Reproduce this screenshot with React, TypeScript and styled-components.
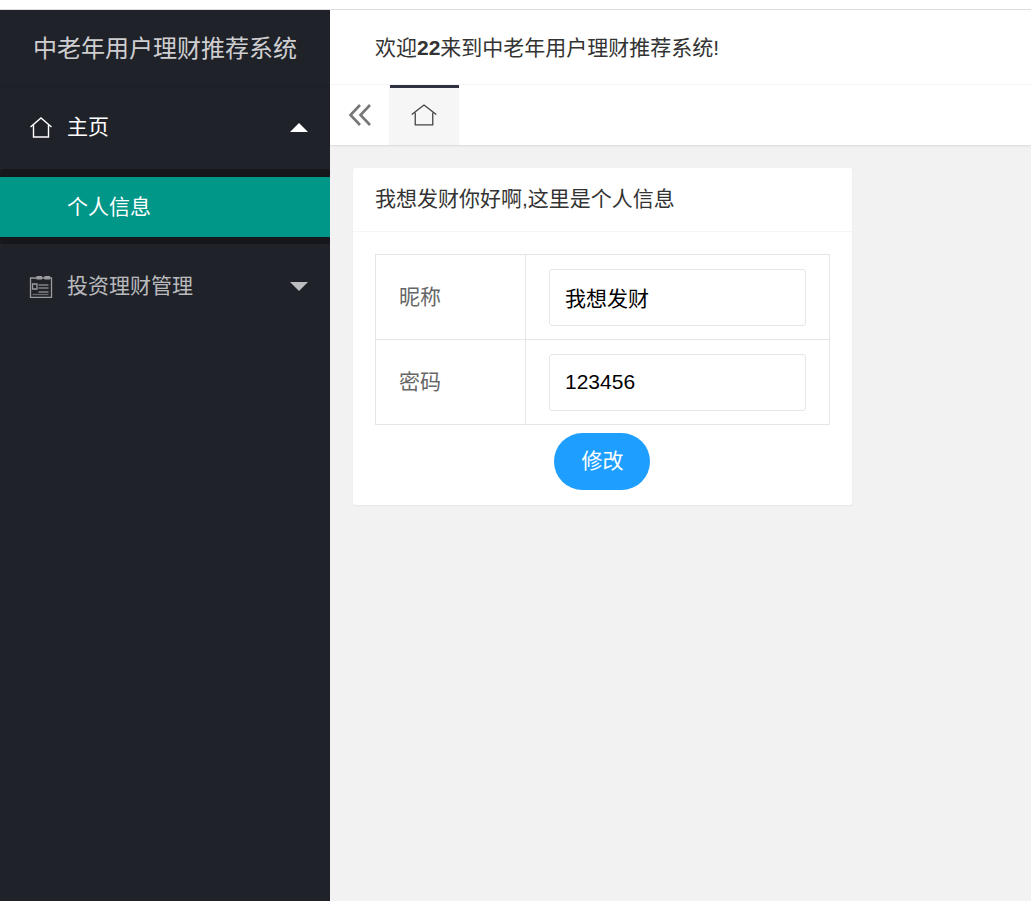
import React from 'react';
import styled, { createGlobalStyle } from 'styled-components';

const GlobalStyle = createGlobalStyle`
  html, body {
    margin: 0;
    padding: 0;
    height: 100%;
    overflow: hidden;
    background: #fff;
  }
  body {
    font-family: "Liberation Sans", "Noto Sans CJK SC", sans-serif;
    font-size: 21px;
    color: #333;
  }
  * {
    box-sizing: border-box;
  }
`;

const HomeIcon = ({
  width = 24,
  height = 24,
  stroke = 1.4,
}: {
  width?: number;
  height?: number;
  stroke?: number;
}) => (
  <svg
    width={width}
    height={height}
    viewBox="0 0 24 24"
    preserveAspectRatio="none"
    fill="none"
    stroke="currentColor"
    strokeWidth={stroke}
  >
    <path d="M1.500 12 12 3l10.500 9" />
    <path d="M4.500 10v12h15V10" />
  </svg>
);

const NewsIcon = () => (
  <svg width="24" height="24" viewBox="0 0 24 24" fill="none" stroke="#9a9b9f" strokeWidth="1.300">
    <path d="M1.500 4h21v19.500h-21z" />
    <path d="M7.500 2h5.500v3.500H7.500zM15.500 2H21v3.500h-5.500z" fill="#9a9b9f" stroke="none" />
    <path d="M3.500 10h4.500v5H3.500z" />
    <path d="M9.500 11h10M9.500 14h10M9.500 18h10" strokeWidth="1.600" opacity="0.8" />
    <path d="M3.500 20.500h16" opacity="0.6" />
  </svg>
);

const DoubleLeftIcon = () => (
  <svg width="24" height="24" viewBox="0 0 24 24" fill="none" stroke="currentColor" strokeWidth="2.600">
    <path d="M12 2 2.500 12l9.500 10" />
    <path d="M22 2l-9.500 10L22 22" />
  </svg>
);

export default function App() {
  return (
    <>
      <GlobalStyle />
      <Page>
        <TopStrip />
        <Shell>
          <Sidebar>
            <Logo>中老年用户理财推荐系统</Logo>
            <NavGroup>
              <NavRow $active>
                <NavIcon>
                  <HomeIcon />
                </NavIcon>
                <NavLabel>主页</NavLabel>
                <Caret $up />
              </NavRow>
              <SubMenu>
                <SubItem>个人信息</SubItem>
              </SubMenu>
              <NavRow>
                <NavIcon>
                  <NewsIcon />
                </NavIcon>
                <NavLabel>投资理财管理</NavLabel>
                <Caret />
              </NavRow>
            </NavGroup>
          </Sidebar>
          <Main>
            <Header>
              <HeaderText>
                欢迎<strong>22</strong>来到中老年用户理财推荐系统!
              </HeaderText>
            </Header>
            <TabBar>
              <CollapseButton>
                <DoubleLeftIcon />
              </CollapseButton>
              <HomeTab>
                <HomeIcon width={28} height={25} stroke={1.100} />
              </HomeTab>
            </TabBar>
            <Content>
              <Card>
                <CardHeader>我想发财你好啊,这里是个人信息</CardHeader>
                <CardBody>
                  <FormTable>
                    <tbody>
                      <tr>
                        <LabelCell>昵称</LabelCell>
                        <InputCell>
                          <TextInput defaultValue="我想发财" />
                        </InputCell>
                      </tr>
                      <tr>
                        <LabelCell>密码</LabelCell>
                        <InputCell>
                          <TextInput defaultValue="123456" />
                        </InputCell>
                      </tr>
                    </tbody>
                  </FormTable>
                  <ButtonRow>
                    <SubmitButton type="button">修改</SubmitButton>
                  </ButtonRow>
                </CardBody>
              </Card>
            </Content>
          </Main>
        </Shell>
      </Page>
    </>
  );
}

const Page = styled.div`
  display: flex;
  flex-direction: column;
  height: 100vh;
`;

const TopStrip = styled.div`
  height: 10px;
  flex: none;
  background: #fff;
  border-bottom: 1px solid #ddd;
`;

const Shell = styled.div`
  flex: 1;
  display: flex;
  min-height: 0;
`;

const Sidebar = styled.aside`
  width: 330px;
  flex: none;
  background: #20222a;
`;

const Logo = styled.div`
  height: 75px;
  line-height: 77px;
  text-align: center;
  font-size: 24px;
  color: rgba(255, 255, 255, 0.8);
  background: #20222a;
  box-shadow: 0 1px 2px 0 rgba(0, 0, 0, 0.1);
`;

const NavGroup = styled.nav`
  display: flex;
  flex-direction: column;
`;

const NavRow = styled.div<{ $active?: boolean }>`
  height: 84px;
  display: flex;
  align-items: center;
  padding-left: 29px;
  padding-right: 22px;
  color: ${p => (p.$active ? '#fff' : 'rgba(255, 255, 255, 0.7)')};
`;

const NavIcon = styled.span`
  width: 24px;
  height: 24px;
  display: flex;
  margin-right: 14px;
`;

const NavLabel = styled.span`
  flex: 1;
  padding-bottom: 4px;
`;

const Caret = styled.span<{ $up?: boolean }>`
  width: 0;
  height: 0;
  border-left: 9px solid transparent;
  border-right: 9px solid transparent;
  ${p =>
    p.$up
      ? 'border-bottom: 9px solid currentColor;'
      : 'border-top: 9px solid currentColor;'}
`;

const SubMenu = styled.div`
  padding: 8px 0 7px;
  background: rgba(0, 0, 0, 0.3);
  border-radius: 3px;
`;

const SubItem = styled.div`
  height: 60px;
  line-height: 60px;
  padding-left: 67px;
  color: #fff;
  background: #009688;
`;

const Main = styled.main`
  flex: 1;
  min-width: 0;
  display: flex;
  flex-direction: column;
  background: #f2f2f2;
`;

const Header = styled.header`
  height: 75px;
  flex: none;
  display: flex;
  align-items: center;
  padding-left: 45px;
  background: #fff;
  border-bottom: 1px solid #f6f6f6;
`;

const HeaderText = styled.span`
  padding-bottom: 2px;
`;

const TabBar = styled.div`
  height: 60px;
  flex: none;
  display: flex;
  background: #fff;
  box-shadow: 0 1px 2px 0 rgba(0, 0, 0, 0.1);
`;

const CollapseButton = styled.div`
  width: 59px;
  display: flex;
  align-items: center;
  justify-content: center;
  color: #777;
`;

const HomeTab = styled.div`
  width: 70px;
  padding-bottom: 2px;
  display: flex;
  align-items: center;
  justify-content: center;
  color: #444;
  background: #f6f6f6;
  position: relative;

  &::before {
    content: '';
    position: absolute;
    top: 0;
    left: 1px;
    right: 0;
    height: 3px;
    background: #2f3140;
  }
`;

const Content = styled.div`
  flex: 1;
  padding: 23px 23px;
`;

const Card = styled.section`
  width: 499px;
  background: #fff;
  border-radius: 3px;
  box-shadow: 0 1px 2px 0 rgba(0, 0, 0, 0.05);
`;

const CardHeader = styled.div`
  height: 64px;
  line-height: 62px;
  padding-left: 22px;
  border-bottom: 1px solid #f6f6f6;
`;

const CardBody = styled.div`
  padding: 22px 22px 15px;
`;

const FormTable = styled.table`
  width: 455px;
  table-layout: fixed;
  border-collapse: collapse;
`;

const LabelCell = styled.td`
  width: 150px;
  height: 85px;
  padding: 0 0 4px 23px;
  color: #666;
  border: 1px solid #e6e6e6;
`;

const InputCell = styled.td`
  height: 85px;
  padding: 0 23px;
  border: 1px solid #e6e6e6;
`;

const TextInput = styled.input`
  display: block;
  width: 257px;
  height: 57px;
  padding: 0 15px;
  font: inherit;
  color: #000;
  background: #fff;
  border: 1px solid #e6e6e6;
  border-radius: 3px;
  outline: none;
`;

const ButtonRow = styled.div`
  display: flex;
  justify-content: center;
  padding: 8px 2px 0 0;
`;

const SubmitButton = styled.button`
  width: 96px;
  height: 57px;
  padding: 0 0 6px 2px;
  border: none;
  border-radius: 29px;
  font: inherit;
  color: #fff;
  background: #1e9fff;
`;
